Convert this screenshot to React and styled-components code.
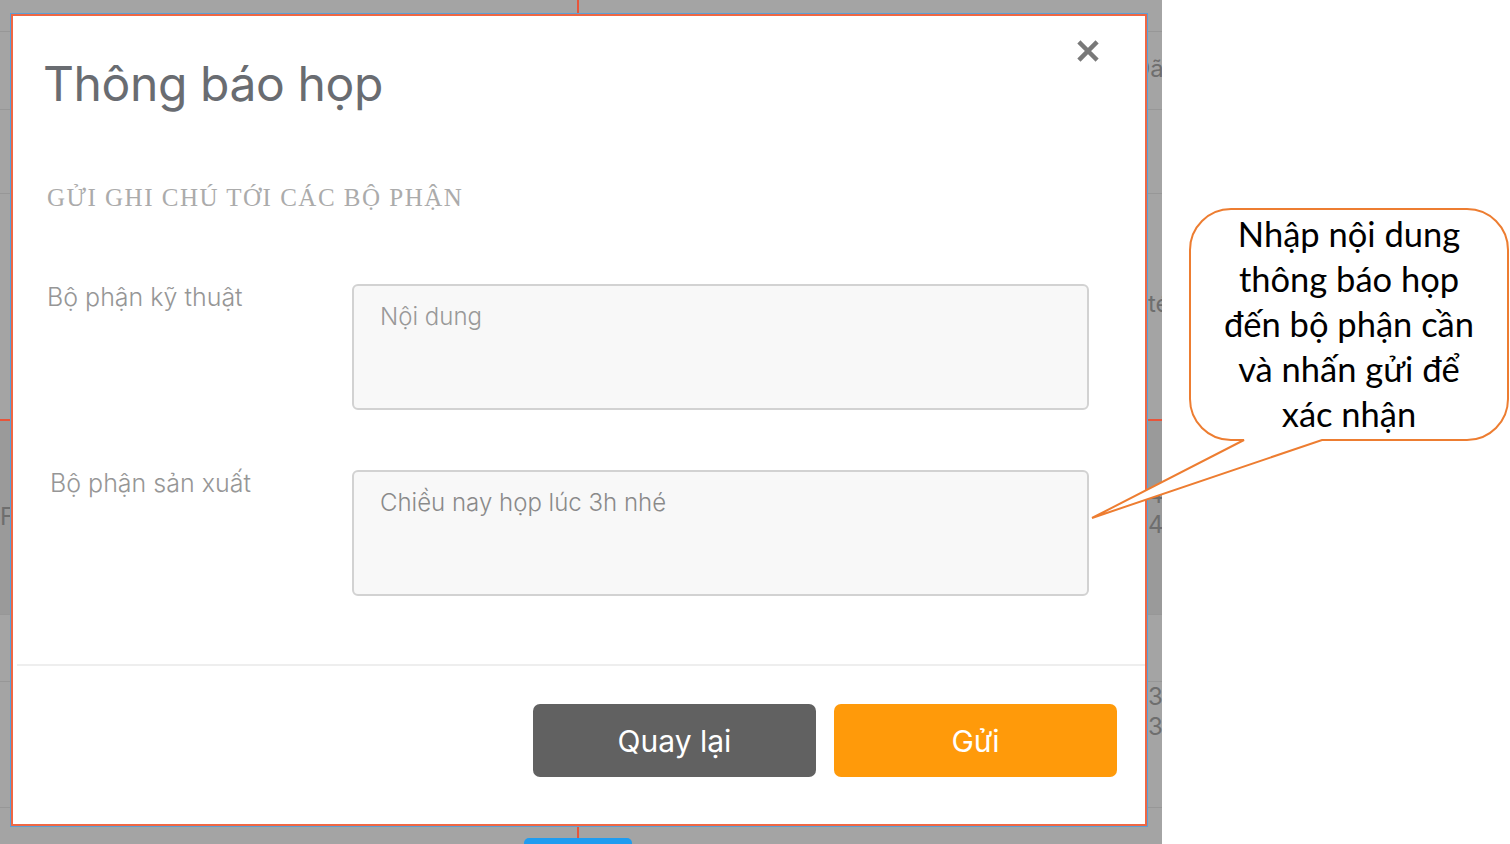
import styled, { createGlobalStyle } from 'styled-components'

// Styles globaux

const GlobalStyle = createGlobalStyle`
  html, body {
    margin: 0;
    padding: 0;
    background: #ffffff;
  }
  * {
    box-sizing: border-box;
  }
`

const uiFont = `Inter, "Noto Sans", sans-serif`

const Page = styled.div`
  width: 1510px;
  height: 844px;
  display: flex;
  position: relative;
  overflow: hidden;
  background: #ffffff;
  font-family: ${uiFont};
`

// Fond grisé (tableau derrière la modale)

const Backdrop = styled.div`
  width: 1162px;
  height: 844px;
  background: #a4a4a4;
  position: relative;
  overflow: hidden;
  display: flex;
  flex-direction: column;
`

const BackRow = styled.div`
  height: ${(p) => p.$h}px;
  flex: none;
  display: flex;
  justify-content: space-between;
  border-bottom: 1px solid #979797;
  background: ${(p) => (p.$dark ? '#9a9a9a' : 'transparent')};
`

const BackCell = styled.div`
  width: ${(p) => p.$w}px;
  padding-top: ${(p) => p.$top}px;
  font-size: 24px;
  line-height: 30px;
  color: #6e6e6e;
  white-space: pre;
  overflow: hidden;
`

const BackButton = styled.div`
  position: absolute;
  left: 524px;
  bottom: -6px;
  width: 108px;
  height: 12px;
  border-radius: 5px;
  background: #1f9cf0;
`

const GuideV = styled.div`
  position: absolute;
  left: 577px;
  top: 0;
  width: 2px;
  height: 844px;
  background: #e8553a;
`

const GuideH = styled.div`
  position: absolute;
  left: 0;
  top: 419px;
  width: 1162px;
  height: 2px;
  background: #e8553a;
`

// Modale

const Modal = styled.div`
  position: absolute;
  left: 11px;
  top: 14px;
  width: 1136px;
  height: 812px;
  background: #ffffff;
  border: 2px solid #ef6744;
  box-shadow: 0 0 0 1px #5b9fd6;
  display: flex;
  flex-direction: column;
`

const Header = styled.div`
  display: flex;
  justify-content: space-between;
  align-items: flex-start;
  padding: 24px 46px 0 30px;
`

const Title = styled.h1`
  margin: 15px 0 0 0;
  font-family: ${uiFont};
  font-weight: 400;
  font-size: 48px;
  line-height: 58px;
  color: #696c71;
  letter-spacing: -0.4px;
`

const CloseButton = styled.button`
  border: none;
  background: none;
  padding: 0;
  width: 22px;
  height: 22px;
  cursor: pointer;
  display: flex;
  align-items: center;
  justify-content: center;
`

const Body = styled.div`
  padding: 0 55px 0 34px;
  display: flex;
  flex-direction: column;
`

const SectionTitle = styled.h2`
  margin: 70px 0 0 0;
  font-family: "Liberation Serif", serif;
  font-weight: 400;
  font-size: 25px;
  line-height: 30px;
  letter-spacing: 1.5px;
  color: #ababab;
`

const FieldRow = styled.div`
  display: grid;
  grid-template-columns: 305px 737px;
  margin-top: ${(p) => p.$top}px;
`

const Label = styled.label`
  font-size: 25px;
  font-weight: 300;
  line-height: 26px;
  color: #969696;
  padding-left: ${(p) => p.$pl}px;
`

const TextArea = styled.textarea`
  width: 737px;
  height: 126px;
  resize: none;
  border: 2px solid #d2d2d2;
  border-radius: 6px;
  background: #f8f8f8;
  padding: 14px 26px;
  font-family: ${uiFont};
  font-size: 24px;
  font-weight: 300;
  line-height: 34px;
  color: #8a8a8a;
  outline: none;
  &::placeholder {
    color: #999999;
  }
`

const Footer = styled.div`
  margin-top: auto;
  margin-left: 4px;
  border-top: 2px solid #eeeeee;
  padding: 38px 28px 47px 0;
  display: flex;
  justify-content: flex-end;
  gap: 18px;
`

const Button = styled.button`
  width: 283px;
  height: 73px;
  border: none;
  border-radius: 7px;
  background: ${(p) => (p.$primary ? '#ff9a0a' : '#616161')};
  color: #ffffff;
  font-family: ${uiFont};
  font-size: 30px;
  cursor: pointer;
`

// Bulle d'annotation

const CalloutShape = styled.svg`
  position: absolute;
  left: 1080px;
  top: 200px;
  width: 430px;
  height: 330px;
`

const CalloutText = styled.div`
  position: absolute;
  left: 1189px;
  top: 208px;
  width: 320px;
  padding-top: 3px;
  text-align: center;
  font-family: Lato, "Open Sans", sans-serif;
  font-size: 34.5px;
  line-height: 45px;
  color: #000000;
`

const rows = [
  { h: 32 },
  { h: 78, right: 'Đã', rw: 29, rt: 22 },
  { h: 84 },
  { h: 226, right: 'té', rw: 14, rt: 95 },
  { h: 195, dark: true, left: 'F', right: '4\n4', rw: 14, rt: 60 },
  { h: 67 },
  { h: 126, right: '3\n3', rw: 14, rt: 0 },
  { h: 40 },
]

const App = () => {
  return (
    <Page>
      <GlobalStyle />
      <Backdrop>
        {rows.map((r, i) => (
          <BackRow key={i} $h={r.h} $dark={r.dark}>
            <BackCell $w={10} $top={82}>
              {r.left}
            </BackCell>
            <BackCell $w={r.rw || 14} $top={r.rt || 0}>
              {r.right}
            </BackCell>
          </BackRow>
        ))}
        <GuideV />
        <GuideH />
        <BackButton />
        <Modal>
          <Header>
            <Title>Thông báo họp</Title>
            <CloseButton aria-label="Đóng">
              <svg width="22" height="22" viewBox="0 0 22 22">
                <path
                  d="M3.5 3.5 L18.5 18.5 M18.5 3.5 L3.5 18.5"
                  stroke="#797979"
                  strokeWidth="4.5"
                  strokeLinecap="square"
                />
              </svg>
            </CloseButton>
          </Header>
          <Body>
            <SectionTitle>GỬI GHI CHÚ TỚI CÁC BỘ PHẬN</SectionTitle>
            <FieldRow $top={71}>
              <Label $pl={0}>Bộ phận kỹ thuật</Label>
              <TextArea placeholder="Nội dung" />
            </FieldRow>
            <FieldRow $top={60}>
              <Label $pl={3}>Bộ phận sản xuất</Label>
              <TextArea defaultValue="Chiều nay họp lúc 3h nhé" />
            </FieldRow>
          </Body>
          <Footer>
            <Button>Quay lại</Button>
            <Button $primary>Gửi</Button>
          </Footer>
        </Modal>
      </Backdrop>

      <CalloutShape viewBox="0 0 430 330">
        <path
          d="M151 9 H387 A41 41 0 0 1 428 50 V199 A41 41 0 0 1 387 240 H242 L12 318 L164 240 H151 A41 41 0 0 1 110 199 V50 A41 41 0 0 1 151 9 Z"
          fill="#ffffff"
          stroke="#ed7d31"
          strokeWidth="2"
        />
      </CalloutShape>
      <CalloutText>
        Nhập nội dung
        <br />
        thông báo họp
        <br />
        đến bộ phận cần
        <br />
        và nhấn gửi để
        <br />
        xác nhận
      </CalloutText>
    </Page>
  )
}

export default App
